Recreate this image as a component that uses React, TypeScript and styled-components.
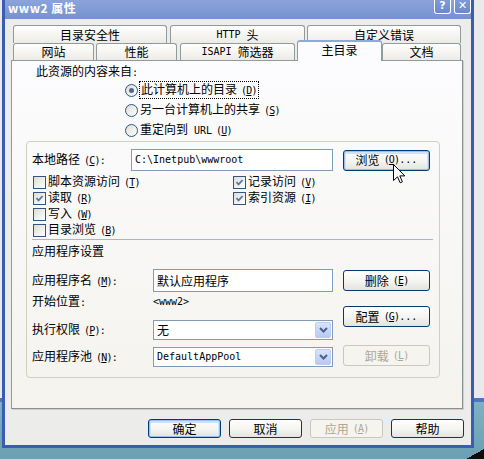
import React from "react";
import styled, { createGlobalStyle, css } from "styled-components";

const Global = createGlobalStyle`
  html, body { margin: 0; padding: 0; }
  body {
    width: 484px; height: 459px; overflow: hidden;
    font-family: "Noto Sans CJK SC", "Liberation Sans", sans-serif;
    font-size: 12px; color: #000;
  }
`;

const Desktop = styled.div`
  position: relative;
  width: 484px;
  height: 459px;
  overflow: hidden;
  background:
    linear-gradient(to bottom right, transparent 50%, #0d0d0d 50%) right bottom / 18px 10px no-repeat,
    linear-gradient(to bottom, #eaeaea 0, #eaeaea 398px, #4e76c0 398px, #4e76c0 402px, #7eb1c1 402px, #6aa0b3 459px);
`;

const Window = styled.div`
  margin-left: 2px;
  width: 472px;
  height: 448px;
  box-sizing: border-box;
  border: 3px solid #3b5cb3;
  border-top: none;
  background: #ececea;
  display: flex;
  flex-direction: column;
`;

const TitleBar = styled.div`
  height: 19px;
  flex: none;
  display: flex;
  align-items: flex-start;
  padding-left: 3px;
  background: linear-gradient(to bottom, #8aa4db, #7691cf);
`;

const Title = styled.div`
  margin-top: 1px;
  color: #fff;
  font-weight: 700;
  font-size: 12px;
  line-height: 14px;
  letter-spacing: 0.5px;
`;

const TitleButtons = styled.div`
  margin-left: auto;
  display: flex;
  gap: 3px;
`;

const TitleBtn = styled.div`
  width: 17px;
  height: 14px;
  box-sizing: border-box;
  border: 1px solid #fff;
  border-top: none;
  border-radius: 0 0 3px 3px;
  background: linear-gradient(to bottom, #7e9ad8, #6c89cb);
  color: #fff;
  font: bold 11px "DejaVu Sans", sans-serif;
  line-height: 12px;
  display: flex;
  justify-content: center;
`;

const Body = styled.div`
  flex: 1;
  display: flex;
  flex-direction: column;
  padding: 6px 8px 0 6px;
`;

const TabRow = styled.div<{ $h: number }>`
  height: ${(p) => p.$h}px;
  display: flex;
  align-items: flex-end;
  padding-left: 2px;
`;

const Tab = styled.div<{ $w: number; $ml?: number; $h: number; $sel?: boolean }>`
  width: ${(p) => p.$w}px;
  margin-left: ${(p) => p.$ml ?? 0}px;
  height: ${(p) => p.$h}px;
  box-sizing: border-box;
  flex: none;
  border: 1px solid #919b9c;
  border-bottom: none;
  border-radius: 3px 3px 0 0;
  background: linear-gradient(to bottom, #ffffff, #ecebe6);
  display: flex;
  align-items: center;
  justify-content: center;
  line-height: 14px;
  ${(p) =>
    p.$sel &&
    css`
      position: relative;
      z-index: 2;
      margin-top: -3px;
      margin-bottom: -1px;
      background: #fcfcfe;
      border-top: 2px solid #91a9d6;
      padding-bottom: 4px;
    `}
`;

const Panel = styled.div`
  height: 349px;
  box-sizing: border-box;
  border: 1px solid #919b9c;
  border-right-color: #8a8f90;
  border-bottom-color: #8a8f90;
  box-shadow: 1px 1px 0 #d0cfca;
  background: linear-gradient(to bottom, #fcfcfe, #f4f3ee);
  padding: 0 22px 0 14px;
  display: flex;
  flex-direction: column;
`;

const Heading = styled.div`
  margin-top: 3px;
  padding-left: 10px;
  line-height: 14px;
`;

const RadioList = styled.div`
  padding-left: 99px;
  display: flex;
  flex-direction: column;
`;

const RadioRow = styled.div`
  height: 20px;
  display: flex;
  align-items: center;
  gap: 2px;
  line-height: 14px;
`;

const RadioCircle = styled.span<{ $on?: boolean }>`
  width: 13px;
  height: 13px;
  box-sizing: border-box;
  border-radius: 50%;
  border: 1px solid #2f5582;
  background: linear-gradient(135deg, #dcdcd7, #ffffff);
  flex: none;
  display: flex;
  align-items: center;
  justify-content: center;
  &::after {
    content: "";
    display: ${(p) => (p.$on ? "block" : "none")};
    width: 5px;
    height: 5px;
    border-radius: 50%;
    background: #51698e;
  }
`;

const Focus = styled.span`
  outline: 1px dotted #000;
  outline-offset: 0;
  padding: 0 1px;
`;

const GroupBox = styled.div`
  margin-top: 1px;
  border: 1px solid #d0d0bf;
  border-radius: 4px;
  padding: 7px 0 10px 5px;
  display: flex;
  flex-direction: column;
`;

const PathRow = styled.div`
  height: 22px;
  display: flex;
  align-items: center;
`;

const FieldLabel = styled.div<{ $w: number }>`
  width: ${(p) => p.$w}px;
  flex: none;
  line-height: 14px;
`;

const TextBox = styled.div<{ $w: number; $h: number }>`
  width: ${(p) => p.$w}px;
  height: ${(p) => p.$h}px;
  box-sizing: border-box;
  border: 1px solid #7f9db9;
  background: #fff;
  padding-left: 3px;
  display: flex;
  align-items: center;
  line-height: 14px;
  flex: none;
`;

type BtnKind = "normal" | "focus" | "disabled";

const Btn = styled.div<{ $w: number; $h: number; $kind?: BtnKind; $ml?: number }>`
  width: ${(p) => p.$w}px;
  height: ${(p) => p.$h}px;
  margin-left: ${(p) => p.$ml ?? 0}px;
  box-sizing: border-box;
  flex: none;
  border: 1px solid #003c74;
  border-radius: 3px;
  background: linear-gradient(to bottom, #ffffff 0%, #f4f4f0 55%, #e4e3dd 100%);
  display: flex;
  align-items: center;
  justify-content: center;
  line-height: 14px;
  white-space: nowrap;
  ${(p) =>
    p.$kind === "focus" &&
    css`
      box-shadow: inset 0 0 0 1px #9dbdec, inset 0 1px 0 2px #cfe2fb;
    `}
  ${(p) =>
    p.$kind === "disabled" &&
    css`
      border-color: #cac8bb;
      background: #f5f4ef;
      color: #aca899;
    `}
`;

const Checks = styled.div`
  margin-top: 3px;
  padding-left: 1px;
  display: grid;
  grid-template-columns: 200px auto;
  grid-template-rows: repeat(4, 16px);
  grid-auto-flow: column;
`;

const CheckItem = styled.div`
  display: flex;
  align-items: center;
  gap: 2px;
  line-height: 14px;
`;

const Box = styled.span`
  width: 13px;
  height: 13px;
  box-sizing: border-box;
  border: 1px solid #34557f;
  background: linear-gradient(135deg, #dcdcd7, #ffffff);
  flex: none;
  display: flex;
  align-items: center;
  justify-content: center;
`;

const Separator = styled.div`
  margin: 1px 6px 0 0;
  height: 1px;
  background: #a7b6cc;
`;

const SectionTitle = styled.div`
  margin-top: 4px;
  line-height: 14px;
`;

const AppArea = styled.div`
  margin-top: 11px;
  display: flex;
`;

const FieldsCol = styled.div`
  width: 301px;
  display: flex;
  flex-direction: column;
`;

const FieldRow = styled.div<{ $h: number; $mt?: number }>`
  height: ${(p) => p.$h}px;
  margin-top: ${(p) => p.$mt ?? 0}px;
  display: flex;
  align-items: center;
  line-height: 14px;
`;

const ButtonsCol = styled.div`
  margin-left: 10px;
  padding-top: 1px;
  display: flex;
  flex-direction: column;
`;

const Gap = styled.div<{ $h: number }>`
  height: ${(p) => p.$h}px;
  flex: none;
`;

const Select = styled.div`
  flex: 1;
  height: 20px;
  box-sizing: border-box;
  border: 1px solid #7f9db9;
  background: #fff;
  padding-left: 3px;
  display: flex;
  align-items: center;
  line-height: 14px;
`;

const DropBtn = styled.span`
  margin-left: auto;
  margin-right: 1px;
  width: 16px;
  height: 16px;
  box-sizing: border-box;
  border-radius: 2px;
  border: 1px solid #bccdf3;
  background: linear-gradient(to bottom, #d8e3fd, #b6c9f6);
  display: flex;
  align-items: center;
  justify-content: center;
`;

const ButtonBar = styled.div`
  margin-top: 10px;
  margin-right: -1px;
  display: flex;
  justify-content: flex-end;
  gap: 8px;
`;

const Cursor = styled.svg`
  position: absolute;
  left: 393px;
  top: 164px;
`;

const L = styled.span`
  font-family: "DejaVu Sans Mono", "Liberation Mono", monospace;
  font-size: 10px;
`;

const Mn = styled.span`
  margin-left: 4px;
  font-family: "DejaVu Sans Mono", "Liberation Mono", monospace;
  font-size: 10px;
  letter-spacing: -0.8px;
`;

const Tail = styled.span`
  letter-spacing: 0;
`;

const K = ({ c, tail = "" }: { c: string; tail?: string }) => (
  <Mn>
    (<u>{c}</u>)
    {tail && <Tail>{tail}</Tail>}
  </Mn>
);

const CheckMark = () => (
  <svg width="9" height="9" viewBox="0 0 9 9">
    <path d="M1.5 4.2 L3.6 6.4 L7.6 2" fill="none" stroke="#5679a6" strokeWidth="1.8" />
  </svg>
);

const Check = ({ on, children }: { on?: boolean; children: React.ReactNode }) => (
  <CheckItem>
    <Box>{on && <CheckMark />}</Box>
    <span>{children}</span>
  </CheckItem>
);

const Arrow = () => (
  <svg width="9" height="6" viewBox="0 0 9 6">
    <path d="M1 1 L4.5 4.5 L8 1" fill="none" stroke="#4d6185" strokeWidth="2" />
  </svg>
);

export default function App() {
  return (
    <>
      <Global />
      <Desktop>
        <Window>
          <TitleBar>
            <Title>www2 属性</Title>
            <TitleButtons>
              <TitleBtn>?</TitleBtn>
              <TitleBtn>✕</TitleBtn>
            </TitleButtons>
          </TitleBar>
          <Body>
            <TabRow $h={18}>
              <Tab $w={154} $h={18}>目录安全性</Tab>
              <Tab $w={135} $ml={3} $h={18}>
                <L>HTTP&nbsp;</L>头
              </Tab>
              <Tab $w={154} $ml={2} $h={18}>自定义错误</Tab>
            </TabRow>
            <TabRow $h={17}>
              <Tab $w={81} $h={17}>网站</Tab>
              <Tab $w={81} $ml={2} $h={17}>性能</Tab>
              <Tab $w={115} $ml={3} $h={17}>
                <L>ISAPI&nbsp;</L>筛选器
              </Tab>
              <Tab $w={85} $ml={2} $h={21} $sel>主目录</Tab>
              <Tab $w={79} $h={17}>文档</Tab>
            </TabRow>
            <Panel>
              <Heading>
                此资源的内容来自<L>:</L>
              </Heading>
              <RadioList>
                <RadioRow>
                  <RadioCircle $on />
                  <Focus>
                    此计算机上的目录<K c="D" />
                  </Focus>
                </RadioRow>
                <RadioRow>
                  <RadioCircle />
                  <span>
                    另一台计算机上的共享<K c="S" />
                  </span>
                </RadioRow>
                <RadioRow>
                  <RadioCircle />
                  <span>
                    重定向到<L>&nbsp;URL</L>
                    <K c="U" />
                  </span>
                </RadioRow>
              </RadioList>
              <GroupBox>
                <PathRow>
                  <FieldLabel $w={99}>
                    本地路径<K c="C" tail=":" />
                  </FieldLabel>
                  <TextBox $w={202} $h={22}>
                    <L>C:\Inetpub\wwwroot</L>
                  </TextBox>
                  <Btn $w={87} $h={21} $ml={10} $kind="focus">
                    浏览<K c="O" tail="..." />
                  </Btn>
                </PathRow>
                <Checks>
                  <Check>
                    脚本资源访问<K c="T" />
                  </Check>
                  <Check on>
                    读取<K c="R" />
                  </Check>
                  <Check>
                    写入<K c="W" />
                  </Check>
                  <Check>
                    目录浏览<K c="B" />
                  </Check>
                  <Check on>
                    记录访问<K c="V" />
                  </Check>
                  <Check on>
                    索引资源<K c="I" />
                  </Check>
                </Checks>
                <Separator />
                <SectionTitle>应用程序设置</SectionTitle>
                <AppArea>
                  <FieldsCol>
                    <FieldRow $h={23}>
                      <FieldLabel $w={121}>
                        应用程序名<K c="M" tail=":" />
                      </FieldLabel>
                      <TextBox $w={180} $h={23}>
                        默认应用程序
                      </TextBox>
                    </FieldRow>
                    <FieldRow $h={14} $mt={3}>
                      <FieldLabel $w={121}>
                        开始位置<L>:</L>
                      </FieldLabel>
                      <L>&lt;www2&gt;</L>
                    </FieldRow>
                    <FieldRow $h={20} $mt={11}>
                      <FieldLabel $w={121}>
                        执行权限<K c="P" tail=":" />
                      </FieldLabel>
                      <Select>
                        无
                        <DropBtn>
                          <Arrow />
                        </DropBtn>
                      </Select>
                    </FieldRow>
                    <FieldRow $h={20} $mt={7}>
                      <FieldLabel $w={121}>
                        应用程序池<K c="N" tail=":" />
                      </FieldLabel>
                      <Select>
                        <L>DefaultAppPool</L>
                        <DropBtn>
                          <Arrow />
                        </DropBtn>
                      </Select>
                    </FieldRow>
                  </FieldsCol>
                  <ButtonsCol>
                    <Btn $w={87} $h={21}>
                      删除<K c="E" />
                    </Btn>
                    <Gap $h={15} />
                    <Btn $w={87} $h={21}>
                      配置<K c="G" tail="..." />
                    </Btn>
                    <Gap $h={18} />
                    <Btn $w={87} $h={21} $kind="disabled">
                      卸载<K c="L" />
                    </Btn>
                  </ButtonsCol>
                </AppArea>
              </GroupBox>
            </Panel>
            <ButtonBar>
              <Btn $w={73} $h={19} $kind="focus">确定</Btn>
              <Btn $w={73} $h={19}>取消</Btn>
              <Btn $w={73} $h={19} $kind="disabled">
                应用<K c="A" />
              </Btn>
              <Btn $w={73} $h={19}>帮助</Btn>
            </ButtonBar>
          </Body>
        </Window>
        <Cursor width="13" height="20" viewBox="0 0 13 20">
          <path
            d="M0.5 0.5 L0.5 16.5 L4.5 12.8 L7.2 18.8 L9.4 17.8 L6.8 11.9 L11.8 11.9 Z"
            fill="#fff"
            stroke="#000"
            strokeWidth="1"
            strokeLinejoin="miter"
          />
        </Cursor>
      </Desktop>
    </>
  );
}
